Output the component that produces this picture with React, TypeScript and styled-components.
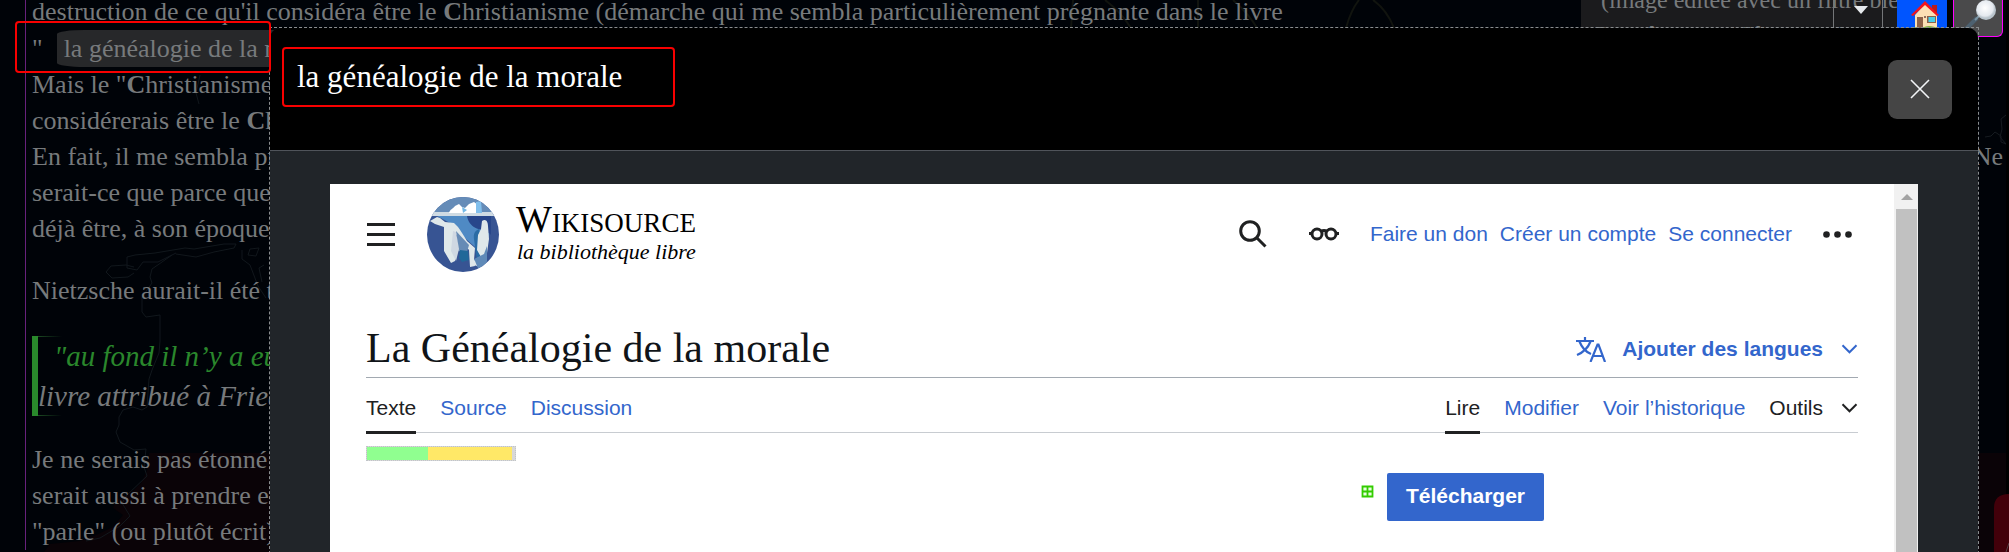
import React from 'react';
import styled, { createGlobalStyle } from 'styled-components';

const Global = createGlobalStyle`
  *, *::before, *::after { box-sizing: border-box; }
  body { margin: 0; background: #000308; }
  button { font: inherit; border: 0; padding: 0; background: none; cursor: pointer; }
  h1, h2, p, blockquote { margin: 0; font-weight: 400; }
  a { color: inherit; text-decoration: none; }
  svg { display: block; flex: none; }
`;

const serif = '"Liberation Serif", "Times New Roman", serif';
const sans = '"Liberation Sans", Arial, sans-serif';

/* ---------- dimmed page behind the dialog ---------- */

const Page = styled.div`
  position: relative;
  min-height: 100vh;
  overflow: hidden;
  background: #000308;
  color: #777a7c;
  font-family: ${serif};
`;

const MapLeft = styled.svg`
  position: absolute;
  left: 0;
  top: 0;
`;

const MapRight = styled.svg`
  position: absolute;
  right: 0;
  top: 0;
`;

const Arcs = styled.svg`
  position: absolute;
  left: 1070px;
  top: 0;
`;

const Article = styled.article`
  position: relative;
  min-height: 100vh;
  margin: 0 6px 0 25px;
  padding-left: 6px;
  border-left: 1px solid #68217c;
  font-size: 26px;
  line-height: 36px;
  white-space: nowrap;
`;

const Paragraph = styled.p<{ $cut?: boolean }>`
  margin: ${(p) => (p.$cut ? '-6px 0 24px' : '26px 0 24px')};
`;

const Line = styled.span`
  display: flex;
  justify-content: space-between;
`;

const Tagged = styled.span`
  display: flex;
  gap: 14px;
  line-height: 37px;
`;

const Chip = styled.span`
  padding: 0 7px;
  background: #27282a;
  border-radius: 28px / 4px;
`;

const Quote = styled.blockquote`
  margin-top: 27px;
  border-left: 6px solid #2a8a2c;
  font-size: 29px;
  font-style: italic;
  line-height: 40px;
  background:
    linear-gradient(90deg, #1c4a22, transparent) 0 0 / 24px 1px no-repeat,
    linear-gradient(90deg, #1c4a22, transparent) 0 100% / 24px 1px no-repeat;
`;

const Cited = styled.span`
  display: block;
  padding-left: 16px;
  color: #2a872c;
`;

const Caption = styled.p`
  position: absolute;
  right: 112px;
  top: 0;
  width: 316px;
  height: 40px;
  overflow: hidden;
  padding-left: 14px;
  background: #1b1b1d;
  font-size: 24px;
  line-height: 34px;
  white-space: nowrap;
`;

const CaptionText = styled.span`
  display: block;
  margin-top: -17px;
`;

const Indent = styled.span`
  padding-left: 6px;
`;

const QuickBar = styled.nav`
  position: absolute;
  right: 6px;
  top: 0;
  display: flex;
  align-items: flex-start;
`;

const QuickButton = styled.button<{ $kind: 'menu' | 'home' | 'search' }>`
  display: flex;
  justify-content: center;
  width: 50px;
  height: 37px;
  ${(p) =>
    p.$kind === 'menu' &&
    'margin-right: 14px; border: solid #747678; border-width: 0 1px; padding: 6px 0 0 6px;'}
  ${(p) => p.$kind === 'home' && 'margin-right: 6px; padding-left: 8px; background: #0055ff;'}
  ${(p) =>
    p.$kind === 'search' &&
    'background: #4a4a4b; border: 1px solid #f0f; border-top: 0; border-radius: 0 0 6px 6px;'}
`;

const Marker = styled.div`
  position: absolute;
  left: 15px;
  top: 21px;
  width: 256px;
  height: 52px;
  border: 2px solid #f80000;
  border-radius: 4px;
`;

/* ---------- dialog ---------- */

const Dialog = styled.section`
  position: absolute;
  inset: 27px 30px 0 269px;
  display: flex;
  flex-direction: column;
  border: 1px dashed #8a8d8f;
  border-bottom: 0;
`;

const DialogCard = styled.div`
  flex: 1;
  display: flex;
  flex-direction: column;
  background: #212529;
  border-radius: 10px 10px 0 0;
  overflow: hidden;
`;

const DialogHead = styled.header`
  display: flex;
  align-items: center;
  justify-content: space-between;
  min-height: 123px;
  padding: 0 26px 0 12px;
  background: #000;
  border-bottom: 1px solid #50545a;
`;

const DialogTitle = styled.h2`
  align-self: flex-start;
  margin-top: 19px;
  min-width: 393px;
  padding: 10px 13px;
  border: 2px solid #f80000;
  border-radius: 4px;
  color: #fff;
  font-size: 31px;
  line-height: 36px;
`;

const CloseButton = styled.button`
  display: grid;
  place-items: center;
  width: 64px;
  height: 59px;
  border-radius: 9px;
  background: #454545;
`;

const DialogBody = styled.div`
  flex: 1;
  display: flex;
  padding: 33px 60px 0;
`;

const Frame = styled.div`
  flex: 1;
  display: flex;
  background: #fff;
`;

const Wiki = styled.main`
  flex: 1;
  padding: 0 36px;
  color: #202122;
  font-family: ${sans};
  font-size: 21px;
  line-height: 30px;
`;

const ScrollTrack = styled.div`
  width: 24px;
  padding: 10px 1px 0 2px;
  background: #f1f1f1;
  display: flex;
  flex-direction: column;
  align-items: center;
  gap: 9px;
`;

const ScrollThumb = styled.div`
  flex: 1;
  align-self: stretch;
  background: #c1c1c1;
`;

const WikiHeader = styled.header`
  display: flex;
  align-items: center;
  height: 100px;
  margin-bottom: 37px;
  padding-left: 1px;
`;

const IconButton = styled.button`
  display: flex;
  color: #202122;
`;

const Logo = styled.a`
  display: flex;
  align-items: center;
  gap: 17px;
  margin-left: 31px;
  color: #000;
  font-family: ${serif};
`;

const Wordmark = styled.span`
  display: block;
  font-size: 27px;
  line-height: 32px;
`;

const BigLetter = styled.span`
  font-size: 38px;
`;

const Tagline = styled.span`
  display: block;
  padding-left: 1px;
  font-size: 22px;
  font-style: italic;
  line-height: 26px;
`;

const UserTools = styled.nav`
  display: flex;
  align-items: center;
  gap: 12px;
  margin-left: auto;
  padding-right: 6px;
`;

const Blue = styled.a`
  color: #3366cc;
`;

const ToolIcon = styled(IconButton)<{ $before?: number; $after?: number }>`
  margin-left: ${(p) => p.$before ?? 0}px;
  margin-right: ${(p) => p.$after ?? 0}px;
`;

const TitleRow = styled.div`
  display: flex;
  justify-content: space-between;
  align-items: center;
  height: 57px;
  border-bottom: 1px solid #a2a9b1;
`;

const Heading = styled.h1`
  align-self: flex-start;
  color: #101418;
  font-family: ${serif};
  font-size: 42px;
  line-height: 54px;
`;

const Languages = styled.button`
  display: flex;
  align-items: center;
  gap: 18px;
  color: #3366cc;
  font-weight: 700;
`;

const LanguageLabel = styled.span`
  display: flex;
  align-items: center;
  gap: 16px;
`;

const TabRow = styled.div`
  display: flex;
  justify-content: space-between;
  height: 55px;
  border-bottom: 1px solid #c8ccd1;
`;

const TabGroup = styled.nav`
  display: flex;
  gap: 24px;
`;

const Tab = styled.a<{ $active?: boolean }>`
  height: 56px;
  padding-top: 15px;
  color: ${(p) => (p.$active ? '#202122' : '#3366cc')};
  border-bottom: 3px solid ${(p) => (p.$active ? '#202122' : 'transparent')};
`;

const ToolsButton = styled.button`
  display: flex;
  align-items: center;
  gap: 18px;
  height: 30px;
  margin-top: 15px;
  color: #202122;
`;

const Quality = styled.div`
  display: flex;
  width: 150px;
  height: 15px;
  margin-top: 13px;
  border: 1px dotted #c0c4c8;
  background: #d8d8d8;
`;

const QualityPart = styled.span<{ $share: number; $tone: string }>`
  width: ${(p) => p.$share}%;
  background: ${(p) => p.$tone};
`;

const DownloadRow = styled.div`
  display: flex;
  align-items: flex-start;
  justify-content: flex-end;
  gap: 13px;
  padding: 12px 314px 0 0;
`;

const GridMark = styled.svg`
  margin-top: 12px;
`;

const Download = styled.button`
  height: 48px;
  padding: 0 19px 2px;
  border-radius: 2px;
  background: #3366cc;
  color: #fff;
  font-weight: 700;
`;

/* ---------- drawings ---------- */

const Chevron = () => (
  <svg width="17" height="10" viewBox="0 0 17 10" fill="none" stroke="currentColor" strokeWidth="2">
    <path d="M1.500 1.300L8.500 8.300L15.500 1.300" />
  </svg>
);

const House = () => (
  <svg width="30" height="32" viewBox="0 0 30 32">
    <path d="M21 5h5v9h-5z" fill="#b71c1c" />
    <path d="M14 4L4 15v15h22V15z" fill="#fbe0b4" />
    <path d="M14 1L0 15l2 1L14 5l12 11 2-1z" fill="#f4141b" />
    <path d="M6 17h6v12H6z" fill="#8d6248" />
    <path d="M16 16h9v7h-9z" fill="#8d6248" />
    <path d="M17.500 17h6.500v5h-6.500z" fill="#45cfe8" />
    <circle cx="14" cy="17" r="1" fill="#6d4c41" />
    <path d="M0 32c0-5 6-6 10-3 5-4 10-4 19 0v3z" fill="#7cb342" />
    <path d="M6 29h6l2 3H3z" fill="#eee" />
  </svg>
);

const Lens = () => (
  <svg width="44" height="37" viewBox="0 0 44 37">
    <path d="M21 18L2 37" stroke="#4d6170" strokeWidth="4" />
    <path d="M23 16l-4 4" stroke="#7d97a5" strokeWidth="2" />
    <defs>
      <radialGradient id="lens" cx=".45" cy=".4">
        <stop offset="0" stopColor="#fff" />
        <stop offset=".8" stopColor="#e4e9ef" />
        <stop offset="1" stopColor="#b9c4cc" />
      </radialGradient>
    </defs>
    <circle cx="30" cy="10" r="10" fill="url(#lens)" />
  </svg>
);

const Iceberg = () => (
  <svg width="72" height="75" viewBox="0 0 72 75">
    <defs>
      <clipPath id="globe"><ellipse cx="36" cy="37.500" rx="36" ry="37.500" /></clipPath>
    </defs>
    <g clipPath="url(#globe)">
      <path d="M0 0h72v75H0z" fill="#375493" />
      <path d="M0 0h72v16H0z" fill="#658cb8" />
      <path d="M10 19h52v20l-8 16-14-12-15-16z" fill="#4f8ac4" />
      <path d="M40 19h24v19c-3-4-5 0-6-5-5 0-16-2-18-14z" fill="#28468b" />
      <path d="M0 15h72v4H0z" fill="#cfdbe3" />
      <path d="M22 16c1-4 4-4 6-7l4-2 3 3 3 1 4-4 5-2 4 3v8z" fill="#fff" />
      <path d="M49 5l5-1 1 12h-6z" fill="#81bfec" />
      <path d="M35 10l5 3-4 3z" fill="#74b9e6" />
      <path d="M10 20l3 1 5 4 9 1 4 4c3 4 6 9 9 14l8 7-1 12 1 6-5 1-1-17-14-17-1 8 2 11-1 9-4 2-7-12V30l-9-3-5-3z" fill="#dfe8ea" />
      <path d="M29 34l13 14-2 7-9-1z" fill="#668bb5" />
      <path d="M26 34l3 1 3 17-3 12-5-10z" fill="#cfd8e2" />
      <path d="M33 53l8 1 1 9-7 2-3-4z" fill="#206899" />
      <path d="M47 42c-1-6 2-9 5-10l4 24-6 9z" fill="#2a6ca5" />
      <path d="M55 24c4-3 6 1 6 5l1 13-2 14-6 4-4-7 1-15 3-6z" fill="#dfe8ea" />
      <path d="M47 62l10-5 3-8v15l-2 6-6 2-5-6z" fill="#5f8ab8" />
      <path d="M43 58l5 6 2 5-7-2z" fill="#dfe8ea" />
    </g>
  </svg>
);

export default function App() {
  return (
    <Page>
      <Global />
      <MapLeft width="270" height="552" viewBox="0 0 270 552" fill="none" stroke="#11171c">
        <path d="M149 453H270V552H44l6-8 30-3 16-6 17-8 10-12-10-7 3-8 17-9 8-8 6-12z" fill="#0a0307" stroke="none" />
        <path d="M172 255l-20 14-2 8 2 6-10 14 0 15 4 5 14-2v26l-1 12-7 17-3 9-2 28-5 3-9-3-10 3-4 7v8l-3 7 4 10 14 8 12-1-2 18 3 9-20 19-5 8 8 13-10 10-20 12-14 3" />
        <path d="M176 254l20 3 18-5 20-4 2-4-12 0-30 5-9-1-30 5-20 2-8 2v11l10 2 6-8h15l18-9M134 267l-8-2-15 1-5 6 6 6 16-1 6-4M242 250v9l8 6 8 21 8 12M250 249l9-1-3 8-8-1z" />
        <path d="M264 265l-5 3 3 14M200 75l-4 18 3 11" />
      </MapLeft>
      <Arcs width="340" height="28" viewBox="0 0 340 28" fill="none" stroke="#11140f" strokeWidth="2">
        <path d="M3 0l-2 28M35 0q16 12 26 28M128 0v28M163 0q16 14 24 28M289 0q-8 10-13 28M303 0q14 10 21 28" />
      </Arcs>
      <MapRight width="36" height="552" viewBox="0 0 36 552" fill="none">
        <path d="M0 453h33v99H0z" fill="#0a0307" />
        <path d="M12 137l6-1 4-4 6 4 0 6 5 2M33 115l-5 4 1 10-2 8 6 7" stroke="#161b20" />
        <path d="M33 0h3v552h-3z" fill="#000" />
        <path d="M21 552v-44q0-14 15-14v58z" fill="#42000a" />
        <path d="M33 552l3-9" stroke="#554044" />
      </MapRight>

      <Article>
        <Paragraph $cut>
          <Line>
            <span>destruction de ce qu'il considéra être le <b>C</b>hristianisme (démarche qui me sembla particulièrement prégnante dans le livre</span>
          </Line>
          <Tagged>" <Chip>la généalogie de la morale</Chip></Tagged>
          <Line><span>Mais le "<b>C</b>hristianisme</span></Line>
          <Line><span>considérerais être le <b>C</b>h</span></Line>
          <Line><span>En fait, il me sembla pr</span><span>Ne</span></Line>
          <Line>serait-ce que parce que</Line>
          <Line>déjà être, à son époque,</Line>
        </Paragraph>
        <Paragraph>Nietzsche aurait-il été t</Paragraph>
        <Quote>
          <Cited>"au fond il n’y a eu</Cited>
          livre attribué à Fried
        </Quote>
        <Paragraph>
          <Line>Je ne serais pas étonné</Line>
          <Line>serait aussi à prendre en</Line>
          <Line>"parle" (ou plutôt écrit)</Line>
        </Paragraph>
      </Article>

      <Caption>
        <CaptionText>
          <Indent>(image éditée avec un filtre bleu</Indent>
          <br />
          Pour être aussi "fictionnaire
        </CaptionText>
      </Caption>
      <QuickBar aria-label="Raccourcis">
        <QuickButton $kind="menu" aria-label="Menu">
          <svg width="14" height="8" viewBox="0 0 14 8"><path d="M0 0h14L7 8z" fill="#e6e9ec" /></svg>
        </QuickButton>
        <QuickButton $kind="home" aria-label="Accueil"><House /></QuickButton>
        <QuickButton $kind="search" aria-label="Rechercher"><Lens /></QuickButton>
      </QuickBar>

      <Dialog role="dialog" aria-labelledby="dialog-title">
        <DialogCard>
          <DialogHead>
            <DialogTitle id="dialog-title">la généalogie de la morale</DialogTitle>
            <CloseButton aria-label="Fermer">
              <svg width="20" height="20" viewBox="0 0 20 20" stroke="#f2f4f6" strokeWidth="1.600">
                <path d="M1 1l18 18M19 1L1 19" />
              </svg>
            </CloseButton>
          </DialogHead>
          <DialogBody>
            <Frame>
              <Wiki>
                <WikiHeader>
                  <IconButton aria-label="Menu principal">
                    <svg width="29" height="23" viewBox="0 0 29 23">
                      <path d="M0 0h28v3H0zM0 10h28v3H0zM0 20h28v3H0z" fill="#202122" />
                    </svg>
                  </IconButton>
                  <Logo href="#accueil">
                    <Iceberg />
                    <span>
                      <Wordmark><BigLetter>W</BigLetter>IKISOURCE</Wordmark>
                      <Tagline>la bibliothèque libre</Tagline>
                    </span>
                  </Logo>
                  <UserTools aria-label="Outils personnels">
                    <ToolIcon $after={30} aria-label="Rechercher">
                      <svg width="28" height="28" viewBox="0 0 28 28" fill="none" stroke="#202122" strokeWidth="3">
                        <circle cx="11" cy="11" r="9.300" />
                        <path d="M17.500 17.500l9 9" />
                      </svg>
                    </ToolIcon>
                    <ToolIcon $after={19} aria-label="Apparence">
                      <svg width="30" height="14" viewBox="0 0 30 14" fill="none" stroke="#202122" strokeWidth="3">
                        <circle cx="8" cy="7" r="5" />
                        <circle cx="22" cy="7" r="5" />
                        <path d="M12 4.500q3-2 6 0M0 6.500h3M27 6.500h3" />
                      </svg>
                    </ToolIcon>
                    <Blue href="#don">Faire un don</Blue>
                    <Blue href="#compte">Créer un compte</Blue>
                    <Blue href="#connexion">Se connecter</Blue>
                    <ToolIcon $before={19} aria-label="Plus d’options">
                      <svg width="29" height="7" viewBox="0 0 29 7" fill="#202122">
                        <circle cx="3.500" cy="3.500" r="3.300" />
                        <circle cx="14.500" cy="3.500" r="3.300" />
                        <circle cx="25.500" cy="3.500" r="3.300" />
                      </svg>
                    </ToolIcon>
                  </UserTools>
                </WikiHeader>

                <TitleRow>
                  <Heading>La Généalogie de la morale</Heading>
                  <Languages>
                    <LanguageLabel>
                      <svg width="30" height="25" viewBox="0 0 30 25" fill="none" stroke="currentColor" strokeWidth="2.200">
                        <path d="M0 4h18M9 0v4M3.500 4.500C6 11 10 15 15 17M14.500 4.500C12 11 8 15 1 18" />
                        <path d="M14.500 25L21.500 7.500h1L29 25M17 19h10" />
                      </svg>
                      Ajouter des langues
                    </LanguageLabel>
                    <Chevron />
                  </Languages>
                </TitleRow>

                <TabRow>
                  <TabGroup aria-label="Espaces de noms">
                    <Tab href="#texte" $active>Texte</Tab>
                    <Tab href="#source">Source</Tab>
                    <Tab href="#discussion">Discussion</Tab>
                  </TabGroup>
                  <TabGroup aria-label="Affichages">
                    <Tab href="#lire" $active>Lire</Tab>
                    <Tab href="#modifier">Modifier</Tab>
                    <Tab href="#historique">Voir l’historique</Tab>
                    <ToolsButton>Outils <Chevron /></ToolsButton>
                  </TabGroup>
                </TabRow>

                <Quality>
                  <QualityPart $share={41} $tone="#90ff90" />
                  <QualityPart $share={57} $tone="#ffe867" />
                </Quality>

                <DownloadRow>
                  <GridMark width="13" height="13" viewBox="0 0 13 13">
                    <path d="M1.500 1.500h10v10h-10zM6.500 1.500v10M1.500 6.500h10" fill="#e8ffe0" stroke="#33cc00" strokeWidth="1.800" />
                  </GridMark>
                  <Download>Télécharger</Download>
                </DownloadRow>
              </Wiki>
              <ScrollTrack aria-hidden="true">
                <svg width="12" height="6" viewBox="0 0 12 6"><path d="M0 6h12L6 0z" fill="#a3a3a3" /></svg>
                <ScrollThumb />
              </ScrollTrack>
            </Frame>
          </DialogBody>
        </DialogCard>
      </Dialog>
      <Marker />
    </Page>
  );
}
